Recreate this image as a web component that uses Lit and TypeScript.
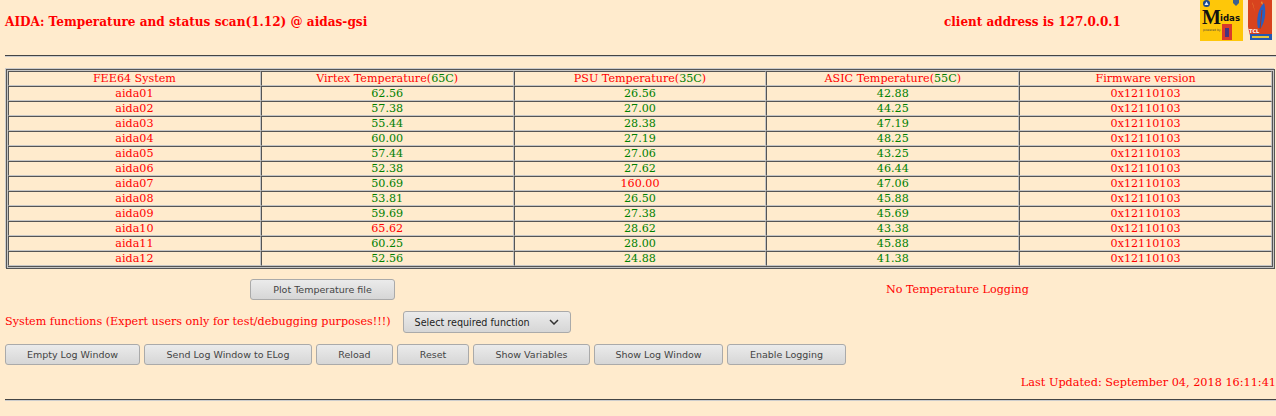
import { LitElement, html, css } from "lit";
import { customElement } from "lit/decorators.js";

const rows: [string, string, string, string][] = [
  ["aida01", "62.56", "26.56", "42.88"],
  ["aida02", "57.38", "27.00", "44.25"],
  ["aida03", "55.44", "28.38", "47.19"],
  ["aida04", "60.00", "27.19", "48.25"],
  ["aida05", "57.44", "27.06", "43.25"],
  ["aida06", "52.38", "27.62", "46.44"],
  ["aida07", "50.69", "160.00", "47.06"],
  ["aida08", "53.81", "26.50", "45.88"],
  ["aida09", "59.69", "27.38", "45.69"],
  ["aida10", "65.62", "28.62", "43.38"],
  ["aida11", "60.25", "28.00", "45.88"],
  ["aida12", "52.56", "24.88", "41.38"],
];

const buttons: [string, string][] = [
  ["Empty Log Window", "b135"],
  ["Send Log Window to ELog", "b168"],
  ["Reload", "b77"],
  ["Reset", "b72"],
  ["Show Variables", "b117"],
  ["Show Log Window", "b129"],
  ["Enable Logging", "b119"],
];

@customElement("app-root")
export class AppRoot extends LitElement {
  static styles = css`
    :host { display: block; width: 1276px; height: 416px; overflow: hidden; background: #ffebcd; color: #f00; font-family: "DejaVu Serif", serif; font-size: 11.15px; line-height: 13px; }
    .head { display: flex; height: 55px; padding-left: 5px; box-sizing: border-box; }
    .title { width: 939px; padding-top: 15px; font-weight: bold; font-size: 12.1px; line-height: 15px; }
    .client { width: 256px; padding-top: 15px; font-weight: bold; font-size: 12px; line-height: 15px; }
    .logos { display: flex; gap: 5px; align-items: flex-start; }
    .rule { height: 1px; margin-left: 5px; background: #444; border-bottom: 1px solid #ccc; }
    .frame { margin: 12px 1px 0 6px; border: 1px solid #555; box-shadow: -1px -1px 0 #ccc; background: #c4c4c4; padding: 1px; }
    table { width: 1265px; border-collapse: separate; border-spacing: 0; table-layout: fixed; border-right: 1px solid #555; border-bottom: 1px solid #555; background: #ffebcd; }
    td { box-sizing: content-box; border-style: solid; border-width: 1px; border-color: #555 #c4c4c4 #c4c4c4 #555; padding: 0; height: 13px; text-align: center; }
    .g { color: #008000; }
    .r { color: #f00; }
    .mid { display: flex; align-items: center; margin-top: 10px; height: 21px; }
    .plot { width: 145px; margin-left: 250px; }
    .nolog { margin-left: 491px; }
    .sys { display: flex; align-items: center; height: 22px; margin-top: 11px; padding-left: 5px; }
    .sys-label { padding-bottom: 1px; }
    .btns { display: flex; gap: 4px; margin-top: 11px; padding-left: 5px; }
    button { box-sizing: border-box; height: 21px; padding: 0; border: 1px solid #aaa; border-radius: 3px; background: linear-gradient(#ebebeb, #d6d6d6); color: #444; font-family: "DejaVu Sans", sans-serif; font-size: 9.5px; }
    .b135 { width: 135px; } .b168 { width: 168px; } .b77 { width: 77px; } .b72 { width: 72px; } .b117 { width: 117px; } .b129 { width: 129px; } .b119 { width: 119px; }
    .sel { width: 168px; height: 22px; margin-left: 12px; display: flex; align-items: center; justify-content: space-between; padding: 0 11px; color: #222; font-size: 9.6px; }
    .upd { text-align: right; margin-top: 11px; font-size: 11.28px; }
    .rule2 { margin-top: 10px; }
  `;
  render() {
    const c = (v: string, lim: number) => (parseFloat(v) > lim ? "r" : "g");
    return html`
      <div class="head">
        <div class="title">AIDA: Temperature and status scan(1.12) @ aidas-gsi</div>
        <div class="client">client address is 127.0.0.1</div>
        <div class="logos">
          <svg width="43" height="41" viewBox="0 0 43 41">
            <rect width="43" height="41" fill="#fec709"/>
            <circle cx="6.5" cy="3.5" r="3.5" fill="#1c4a8a"/>
            <path d="M4.5 5L6.5 1.5L8.5 5Z" fill="#e8eef5"/>
            <path d="M33 0H39V3L36 6L33 3Z" fill="#3a6090"/>
            <text x="2" y="24" font-family="Liberation Serif" font-weight="bold" font-size="20" fill="#111">M</text>
            <text x="20" y="21" font-family="DejaVu Sans" font-weight="bold" font-size="8.6" fill="#111">idas</text>
            <text x="3" y="31" font-family="DejaVu Sans" font-size="3" fill="#444">powered by</text>
            <rect x="22" y="24" width="10" height="16" fill="#d9392b"/>
            <rect x="25" y="28" width="4" height="9" fill="#46337c"/>
          </svg>
          <svg width="24" height="41" viewBox="0 0 24 41">
            <path d="M0 0H24V36L22 40H3L0 27Z" fill="#d8431e"/>
            <path d="M4 2L7 12L5 4Z M14 1L15 5L13 3Z" fill="#f0a040"/>
            <path d="M10 28C8 20 10 8 16 3C18 8 18 20 13 28Z" fill="#2a5fc0"/>
            <path d="M12 29L14 10" stroke="#b03018" stroke-width="1" fill="none"/>
            <text x="1" y="33" font-family="DejaVu Sans" font-weight="bold" font-size="5" fill="#fff">TCL</text>
            <rect x="2" y="34" width="22" height="6" fill="#2459b0"/>
            <rect x="4" y="36" width="17" height="2" fill="#e5c53a"/>
          </svg>
        </div>
      </div>
      <div class="rule"></div>
      <div class="frame">
        <table>
          <tr>
            <td>FEE64 System</td>
            <td>Virtex Temperature(<span class="g">65C</span>)</td>
            <td>PSU Temperature(<span class="g">35C</span>)</td>
            <td>ASIC Temperature(<span class="g">55C</span>)</td>
            <td>Firmware version</td>
          </tr>
          ${rows.map(
            (r) => html`<tr>
              <td>${r[0]}</td>
              <td class=${c(r[1], 65)}>${r[1]}</td>
              <td class=${c(r[2], 100)}>${r[2]}</td>
              <td class=${c(r[3], 55)}>${r[3]}</td>
              <td>0x12110103</td>
            </tr>`
          )}
        </table>
      </div>
      <div class="mid">
        <button class="plot">Plot Temperature file</button>
        <span class="nolog">No Temperature Logging</span>
      </div>
      <div class="sys">
        <span class="sys-label">System functions (Expert users only for test/debugging purposes!!!)</span>
        <button class="sel"><span>Select required function</span>
          <svg width="10" height="6" viewBox="0 0 10 6"><path d="M1 1L5 5L9 1" fill="none" stroke="#333" stroke-width="1.5"/></svg>
        </button>
      </div>
      <div class="btns">
        ${buttons.map(([t, k]) => html`<button class=${k}>${t}</button>`)}
      </div>
      <div class="upd">Last Updated: September 04, 2018 16:11:41</div>
      <div class="rule rule2"></div>
    `;
  }
}
